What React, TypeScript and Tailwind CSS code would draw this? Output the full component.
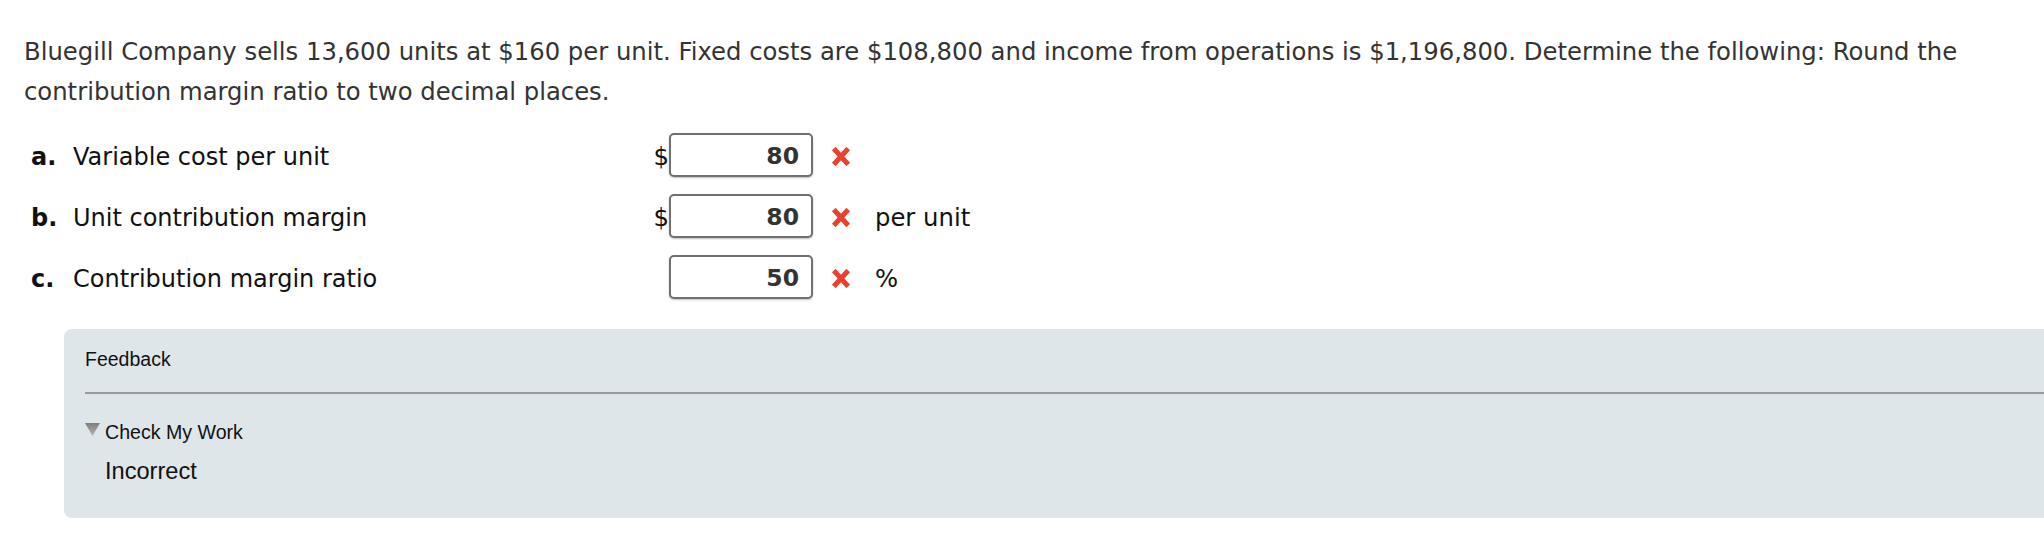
import React from "react";

const font = { fontFamily: '"DejaVu Sans", Verdana, sans-serif' };

function XMark() {
  return (
    <svg width="20" height="19" viewBox="0 0 20 19" className="block">
      <path d="M2.8 1.5 L17.2 17.5 M17.2 1.5 L2.8 17.5" stroke="#e8412e" strokeWidth="5" fill="none" />
    </svg>
  );
}

type RowProps = { letter: string; label: string; dollar: boolean; value: string; suffix?: string };

function Row({ letter, label, dollar, value, suffix }: RowProps) {
  return (
    <div className="flex items-start h-[44px] pl-[31px]">
      <div className="w-[623px] pt-[10px] leading-[28px] text-[24px] text-[#111] whitespace-nowrap flex">
        <span className="w-[42px] font-bold">{letter}</span>
        <span>{label}</span>
      </div>
      <div className="w-[15px] pt-[10px] leading-[28px] text-[24.3px] text-[#111] flex justify-end">{dollar ? "$" : ""}</div>
      <div className="w-[144px] h-[44px] border-2 border-[#707070] rounded-[5px] bg-white shadow-[0_1px_2px_rgba(0,0,0,0.25)] pr-[12px] pt-[7px] text-right font-bold text-[23.5px] leading-[28px] text-[#333]">
        {value}
      </div>
      <div className="ml-[18px] mt-[14px]">
        <XMark />
      </div>
      {suffix ? (
        <div className="ml-[24px] pt-[10px] leading-[28px] text-[24.3px] text-[#111] whitespace-nowrap">{suffix}</div>
      ) : null}
    </div>
  );
}

export default function App() {
  return (
    <div className="w-full h-[536px] bg-white overflow-hidden" style={font}>
      <p className="pl-[24px] pr-[10px] pt-[32px] text-[24.3px] leading-[40px] text-[#333]">
        Bluegill Company sells 13,600 units at $160 per unit. Fixed costs are $108,800 and income from operations is $1,196,800. Determine the following: Round the contribution margin ratio to two decimal places.
      </p>
      <div className="mt-[21px] flex flex-col gap-[17px]">
        <Row letter="a." label="Variable cost per unit" dollar value="80" />
        <Row letter="b." label="Unit contribution margin" dollar value="80" suffix="per unit" />
        <Row letter="c." label="Contribution margin ratio" dollar={false} value="50" suffix="%" />
      </div>
      <div
        className="mt-[30px] ml-[64px] mr-[-20px] rounded-[8px] bg-[#dfe6ea] pl-[21px] pt-[19px] pb-[33px] text-[#111]"
        style={{ fontFamily: '"Liberation Sans", Arial, sans-serif' }}
      >
        <div className="text-[19.5px] leading-[23px]">Feedback</div>
        <div className="mt-[21px] h-[2px] bg-[#969a9e]" />
        <div className="mt-[27px] flex items-start">
          <svg width="15" height="13" viewBox="0 0 15 13" className="mt-[2px] block">
            <defs>
              <linearGradient id="tri" x1="0" y1="0" x2="0" y2="1">
                <stop offset="0" stopColor="#7d7d7d" />
                <stop offset="1" stopColor="#b5b5b5" />
              </linearGradient>
            </defs>
            <polygon points="0,0 15,0 7.5,13" fill="url(#tri)" />
          </svg>
          <span className="ml-[5px] text-[19.6px] leading-[23px]">Check My Work</span>
        </div>
        <div className="mt-[14px] pl-[20px] text-[23.6px] leading-[27px]">Incorrect</div>
      </div>
    </div>
  );
}
